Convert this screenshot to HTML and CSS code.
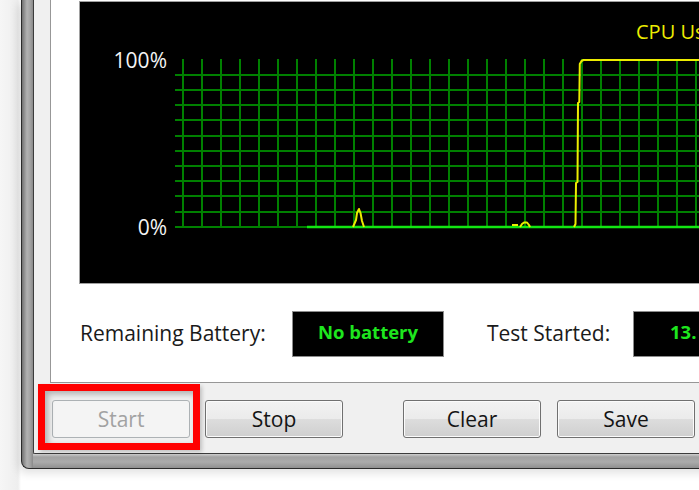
FILE: index.html
```html
<!DOCTYPE html>
<html>
<head>
<meta charset="utf-8">
<link rel="stylesheet" href="styles.css">
</head>
<body>
<div class="desktop">
  <div class="window">
    <div class="client">
      <div class="page">
        <div class="graph">
          <svg class="chart" width="698" height="281" viewBox="80 2 698 281">
            <g stroke="#008000" stroke-width="2" fill="none">
              <path d="M183 59V228M202 59V228M221 59V228M240 59V228M259 59V228M278 59V228M297 59V228M316 59V228M335 59V228M354 59V228M373 59V228M392 59V228M411 59V228M430 59V228M449 59V228M468 59V228M487 59V228M506 59V228M525 59V228M544 59V228M563 59V228M582 59V228M601 59V228M620 59V228M639 59V228M658 59V228M677 59V228M696 59V228M715 59V228M734 59V228M753 59V228M772 59V228"/>
              <path d="M175 75H778M175 90H778M175 105H778M175 120H778M175 136H778M175 151H778M175 166H778M175 181H778M175 196H778M175 212H778M175 227H307"/>
            </g>
            <path d="M307 227H778" stroke="#12e612" stroke-width="2.5" fill="none"/>
            <g stroke="#ecec00" stroke-width="2" fill="none" stroke-linejoin="round">
              <path d="M353 227L356 220L357 213L359 209L360.5 213L362 221L364 227"/>
              <path d="M512 225H518"/>
              <path d="M520 227L522 224L524 222.5H527L529 225L530 227"/>
              <path d="M574 227L575.5 224L576 183L577.5 182L578 103L579.3 102L579.8 64L581.5 61L583.5 60H778"/>
            </g>
            <text class="axis" x="167" y="68" text-anchor="end">100%</text>
            <text class="axis" x="167" y="235" text-anchor="end">0%</text>
            <text class="cpu" x="636" y="39">CPU Us</text>
          </svg>
        </div>
        <div class="stats">
          <span class="label label-battery">Remaining Battery:</span>
          <div class="readout">No battery</div>
          <span class="label label-test">Test Started:</span>
          <div class="readout readout-left">13.</div>
        </div>
      </div>
      <div class="buttons">
        <div class="hl-wrap">
          <button class="btn" disabled>Start</button>
          <div class="highlight"></div>
        </div>
        <button class="btn btn-stop">Stop</button>
        <button class="btn btn-clear">Clear</button>
        <button class="btn btn-save">Save</button>
      </div>
    </div>
  </div>
</div>
</body>
</html>
```
FILE: styles.css
```css
html, body {
  margin: 0;
  padding: 0;
  background: #fff;
}

.desktop {
  width: 699px;
  height: 490px;
  overflow: hidden;
  box-sizing: border-box;
  padding-left: 21px;
  background: linear-gradient(to right, #f6f6f6, #eeeeee 18px, #fff 21px);
  font-family: "Open Sans", "Noto Sans", sans-serif;
}

.window {
  width: 900px;
  height: 469px;
  box-sizing: border-box;
  border-left: 1px solid #2b2b2b;
  border-bottom: 1px solid #2b2b2b;
  border-bottom-left-radius: 8px;
  padding: 0 0 14px 11px;
  background:
    linear-gradient(to right, #707070 0, #8c8c8c 2px, #b2b2b2 5px, #a4a4a4 8px, #8a8a8a 11px) left top / 11px 100% no-repeat,
    linear-gradient(to bottom, #cfcfcf 0, #a2a2a2 3px, #ababab 8px, #8f8f8f 14px) left bottom / 100% 14px no-repeat,
    #9a9a9a;
  box-shadow: -3px 4px 10px rgba(0, 0, 0, 0.12);
}

.client {
  height: 454px;
  box-sizing: border-box;
  border-left: 1px solid #3c3c3c;
  border-bottom: 1px solid #3c3c3c;
  border-bottom-left-radius: 2px;
  background: #f0f0f0;
}

.page {
  margin-left: 16px;
  height: 383px;
  box-sizing: border-box;
  border-left: 1px solid #979797;
  border-bottom: 1px solid #979797;
  background: #fff;
  padding: 1px 0 0 28px;
}

.graph {
  width: 700px;
  height: 283px;
  box-sizing: border-box;
  border: 1px solid #a0a0a0;
  background: #000;
}

.chart {
  display: block;
}

.axis {
  font-family: "Open Sans", sans-serif;
  font-size: 21px;
  fill: #f4f4f4;
}

.cpu {
  font-family: "Open Sans", sans-serif;
  font-size: 20px;
  fill: #ecec00;
}

.stats {
  display: flex;
  align-items: center;
  margin-top: 27px;
  height: 46px;
}

.label {
  flex: none;
  box-sizing: border-box;
  font-size: 21px;
  color: #1a1a1a;
  margin-top: -2px;
}

.label-battery {
  width: 213px;
  padding-left: 1px;
}

.label-test {
  width: 189px;
  padding-left: 43px;
}

.readout {
  flex: none;
  width: 152px;
  height: 46px;
  box-sizing: border-box;
  border: 1px solid #8c8c8c;
  background: #000;
  color: #1ee61e;
  font-size: 18.5px;
  font-weight: 700;
  display: flex;
  align-items: center;
  justify-content: center;
  padding-bottom: 5px;
}

.readout-left {
  justify-content: flex-start;
  padding-left: 36px;
}

.buttons {
  display: flex;
  padding: 17px 0 0 18px;
}

.hl-wrap {
  position: relative;
  flex: none;
}

.btn {
  flex: none;
  display: block;
  width: 138px;
  height: 38px;
  box-sizing: border-box;
  margin: 0;
  padding: 0 0 1px;
  border: 1px solid #707070;
  border-radius: 3px;
  background: linear-gradient(#f2f2f2 0%, #ebebeb 50%, #dddddd 50%, #cfcfcf 100%);
  box-shadow: inset 0 0 0 1px #fbfbfb;
  font-family: "Open Sans", "Noto Sans", sans-serif;
  font-size: 21px;
  color: #141414;
}

.btn:disabled {
  border-color: #adb2b5;
  background: #f4f4f4;
  box-shadow: none;
  color: #a2a2a2;
}

.btn-stop {
  margin-left: 15px;
}

.btn-clear {
  margin-left: 60px;
}

.btn-save {
  margin-left: 16px;
}

.highlight {
  position: absolute;
  left: -14px;
  top: -16px;
  width: 162px;
  height: 66px;
  box-sizing: border-box;
  border: 7px solid #ff0000;
  box-shadow: inset 3px 3px 6px rgba(0, 0, 0, 0.28), 2px 2px 4px rgba(0, 0, 0, 0.2);
  pointer-events: none;
}
```
